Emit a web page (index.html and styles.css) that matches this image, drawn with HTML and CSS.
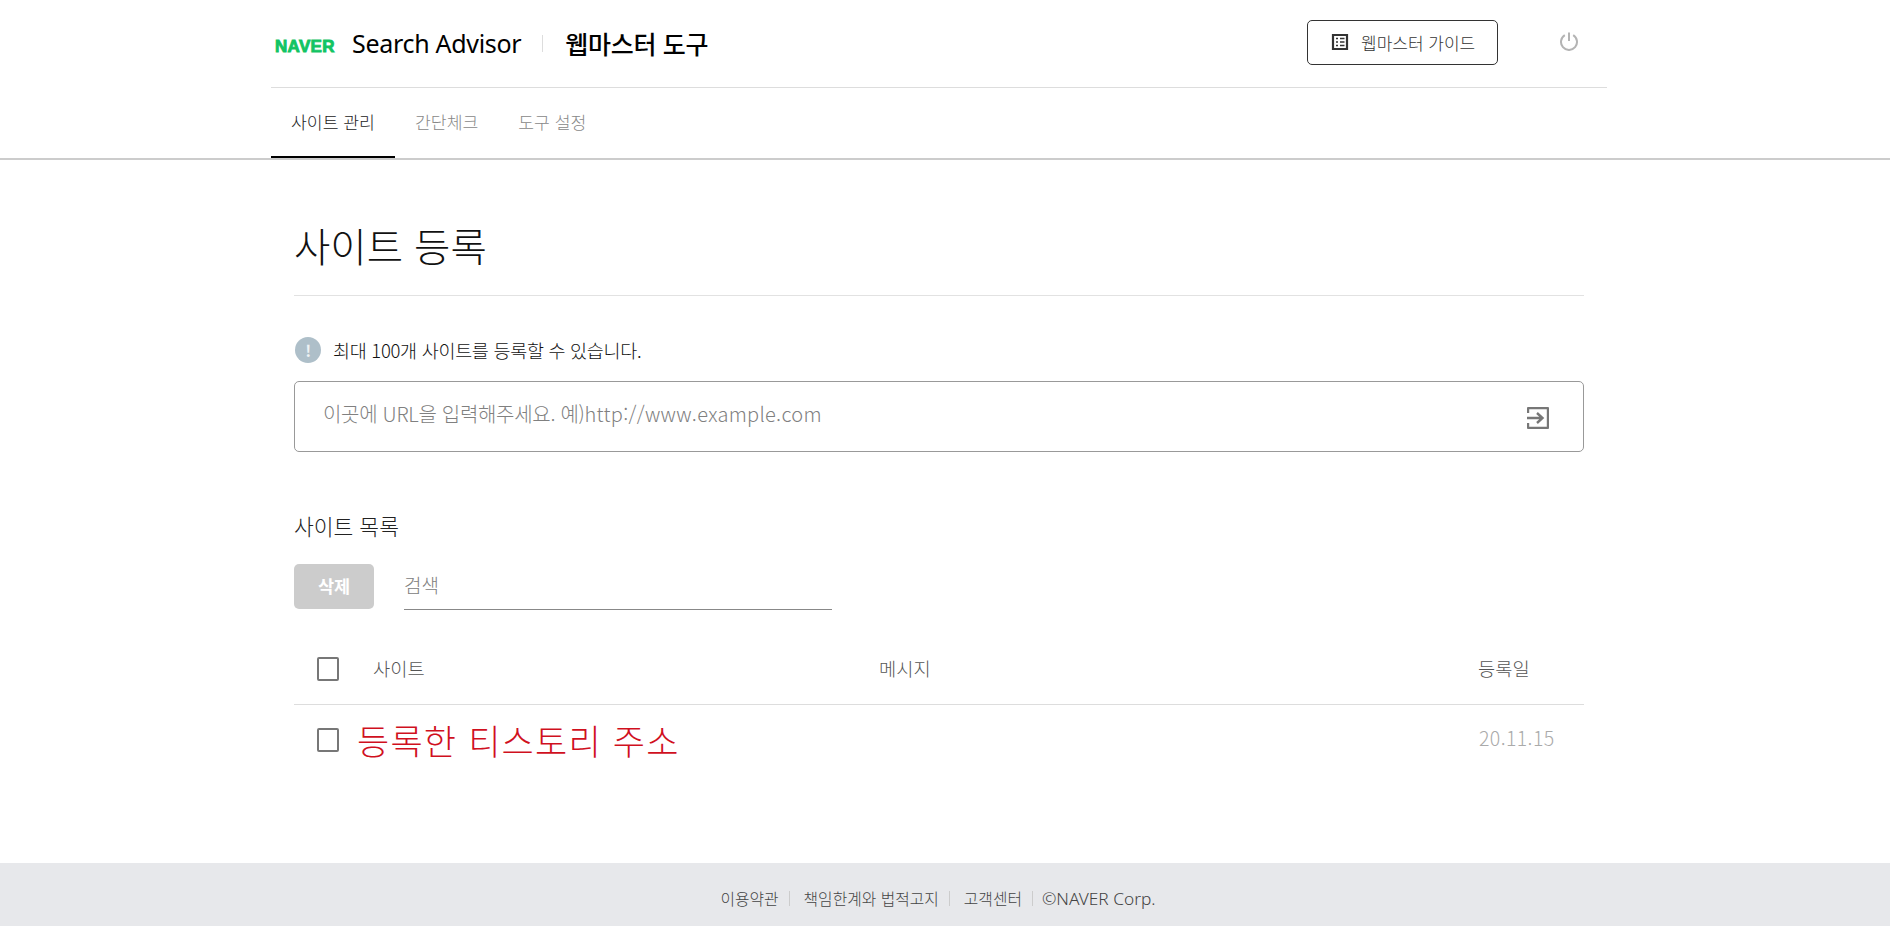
FILE: index.html
```html
<!DOCTYPE html>
<html lang="ko">
<head>
<meta charset="utf-8">
<title>Search Advisor</title>
<link rel="stylesheet" href="styles.css">
</head>
<body>
<header class="site-header">
  <div class="wrap">
    <div class="topbar">
      <div class="brand">
        <span class="naver">NAVER</span>
        <span class="product">Search Advisor</span>
        <span class="brand-sep"></span>
        <span class="tool">웹마스터 도구</span>
      </div>
      <div class="top-actions">
        <a class="guide-btn">
          <svg class="guide-icon" viewBox="0 0 18 18" width="18" height="18"><path d="M2 2h14v14H2z" fill="none" stroke="#333" stroke-width="2.200"/><path d="M5 5.500h2M9 5.500h4.500M5 9h2M9 9h4.500M5 12.500h2M9 12.500h4.500" stroke="#333" stroke-width="1.600" fill="none"/></svg>
          <span>웹마스터 가이드</span>
        </a>
        <svg class="power" viewBox="0 0 20 20" width="20" height="20"><path d="M5.800 4.200a8 8 0 1 0 8.400 0" fill="none" stroke="#b4b4b4" stroke-width="2"/><path d="M10 1.500v8.500" stroke="#b4b4b4" stroke-width="2"/></svg>
      </div>
    </div>
    <nav class="tabs">
      <a class="tab active">사이트 관리</a>
      <a class="tab">간단체크</a>
      <a class="tab">도구 설정</a>
    </nav>
  </div>
</header>
<main class="content">
  <h1 class="page-title">사이트 등록</h1>
  <p class="notice"><span class="notice-icon">!</span>최대 100개 사이트를 등록할 수 있습니다.</p>
  <div class="url-box">
    <span class="url-placeholder">이곳에 URL을 입력해주세요. 예)<span class="url-sample">http://www.example.com</span></span>
    <svg class="url-submit" viewBox="0 0 22 22" width="22" height="22"><path d="M1 6V2a1 1 0 0 1 1-1h18a1 1 0 0 1 1 1v18a1 1 0 0 1-1 1H2a1 1 0 0 1-1-1v-4" fill="none" stroke="#777" stroke-width="2.400"/><path d="M0 11h15M10 6l5.500 5-5.500 5" fill="none" stroke="#777" stroke-width="2.400"/></svg>
  </div>
  <h2 class="list-title">사이트 목록</h2>
  <div class="list-tools">
    <button class="delete-btn">삭제</button>
    <div class="search">검색</div>
  </div>
  <div class="table">
    <div class="row head">
      <span class="check"></span>
      <span class="col-site">사이트</span>
      <span class="col-msg">메시지</span>
      <span class="col-date">등록일</span>
    </div>
    <div class="row item">
      <span class="check"></span>
      <span class="site-name">등록한 티스토리 주소</span>
      <span class="col-date date-val">20.11.15</span>
    </div>
  </div>
</main>
<footer class="site-footer">
  <a class="foot-link">이용약관</a><i class="foot-sep"></i>
  <a class="foot-link">책임한계와 법적고지</a><i class="foot-sep"></i>
  <a class="foot-link">고객센터</a><i class="foot-sep"></i>
  <span class="foot-copy">©NAVER Corp.</span>
</footer>
</body>
</html>
```
FILE: styles.css
```css
* { box-sizing: border-box; }
html, body { margin: 0; padding: 0; }
body {
  height: 926px;
  overflow: hidden;
  display: flex;
  flex-direction: column;
  background: #fff;
  font-family: "Noto Sans CJK KR", "Noto Sans", sans-serif;
  font-weight: 300;
  color: #333;
}
.site-header { height: 160px; border-bottom: 2px solid #ccc; }
.wrap { width: 1336px; margin-left: 271px; }
.topbar {
  height: 88px;
  border-bottom: 1px solid #ddd;
  display: flex;
  align-items: center;
  justify-content: space-between;
}
.brand { display: flex; align-items: center; padding-left: 4px; }
.naver {
  font-family: "Liberation Sans", sans-serif;
  font-weight: 700;
  font-size: 17px;
  color: #12c463;
  -webkit-text-stroke: 0.9px #12c463;
  width: 60px;
  letter-spacing: 0.3px;
  position: relative;
  top: 3px;
}
.product { font-family: "Noto Sans", sans-serif; font-weight: 400; font-size: 25px; color: #000; margin: -2px 0 0 17px; letter-spacing: -0.3px; }
.brand-sep { width: 1px; height: 17px; background: #ddd; margin: 0 22px 0 21px; }
.tool { font-size: 25px; font-weight: 500; color: #000; letter-spacing: -0.3px; margin-top: -2px; }
.top-actions { display: flex; align-items: center; }
.guide-btn {
  width: 191px;
  height: 45px;
  border: 1px solid #333;
  border-radius: 5px;
  display: flex;
  align-items: center;
  padding-left: 23px;
  gap: 12px;
  font-size: 17px;
  font-weight: 300;
  color: #333;
  margin-top: -3px;
}
.guide-icon { width: 18px; height: 18px; }
.power { margin: -6px 28px 0 61px; }
.tabs { display: flex; height: 70px; }
.tab {
  height: 70px;
  padding: 0 20px 3px;
  display: flex;
  align-items: center;
  font-size: 17.200px;
  font-weight: 300;
  color: #888;
}
.tab.active { color: #222; border-bottom: 2px solid #000; width: 124px; padding-bottom: 1px; }
.content { flex: 1; width: 1290px; margin-left: 294px; }
.page-title {
  margin: 0;
  height: 136px;
  padding-top: 56px;
  border-bottom: 1px solid #e2e2e2;
  font-size: 39.500px;
  line-height: 58px;
  font-weight: 300;
  color: #111;
}
.notice {
  margin: 37px 0 0;
  height: 33px;
  display: flex;
  align-items: center;
  font-size: 18.500px;
  font-weight: 300;
  letter-spacing: -0.3px;
  color: #111;
}
.notice-icon {
  width: 26px;
  height: 26px;
  border-radius: 50%;
  background: #aebfc9;
  color: #eef2f4;
  font-weight: 700;
  font-size: 16px;
  display: flex;
  align-items: center;
  justify-content: center;
  margin: 0 12px 0 1px;
}
.url-box {
  margin-top: 15px;
  height: 71px;
  border: 1px solid #999;
  border-radius: 5px;
  display: flex;
  align-items: center;
  justify-content: space-between;
  padding: 0 27px 0 28px;
}
.url-placeholder { font-size: 20px; font-weight: 300; color: #808080; letter-spacing: -0.3px; margin-top: -6px; }
.url-sample { letter-spacing: 0.3px; }
.url-submit { margin: 2px 7px 0 0; }
.list-title { margin: 56px 0 0; font-size: 21.500px; line-height: 36px; font-weight: 300; color: #222; }
.list-tools { display: flex; margin-top: 20px; gap: 30px; }
.delete-btn {
  width: 80px;
  height: 45px;
  border: 0;
  border-radius: 5px;
  background: #ccc;
  color: #fff;
  font: 700 17.500px "Noto Sans CJK KR", sans-serif;
  padding-bottom: 3px;
}
.search {
  width: 428px;
  height: 46px;
  border-bottom: 1px solid #888;
  font-size: 19px;
  font-weight: 300;
  line-height: 42px;
  color: #808080;
}
.table { margin-top: 24px; }
.row { display: flex; align-items: center; padding-left: 23px; }
.row.head { height: 71px; border-bottom: 1px solid #ddd; font-size: 18.700px; font-weight: 300; color: #555; }
.row.item { height: 69px; }
.check { width: 22px; height: 24px; border: 2px solid #777; border-radius: 2px; flex: none; }
.col-site { margin-left: 34px; width: 506px; margin-top: -3px; }
.col-msg { flex: 1; margin-top: -3px; }
.col-date { width: 53px; margin-right: 53px; white-space: nowrap; margin-top: -3px; }
.site-name { flex: 1; margin-left: 18px; font-size: 35px; font-weight: 300; line-height: 40px; color: #d0101e; letter-spacing: 1.200px; }
.date-val { font-size: 19.500px; font-weight: 300; color: #aaa; width: 76px; margin-right: 29px; margin-top: -4px; letter-spacing: 0.4px; }
.site-footer {
  height: 63px;
  background: #e7e8eb;
  display: flex;
  align-items: center;
  justify-content: center;
  font-size: 15.800px;
  font-weight: 300;
  color: #444;
  padding-top: 8px;
  padding-right: 14px;
}
.foot-sep { width: 1px; height: 15px; background: #ccc; margin: 0 14px 0 10px; }
.foot-copy { font-family: "Noto Sans", sans-serif; font-weight: 300; font-size: 17.300px; margin-left: -5px; }
```
